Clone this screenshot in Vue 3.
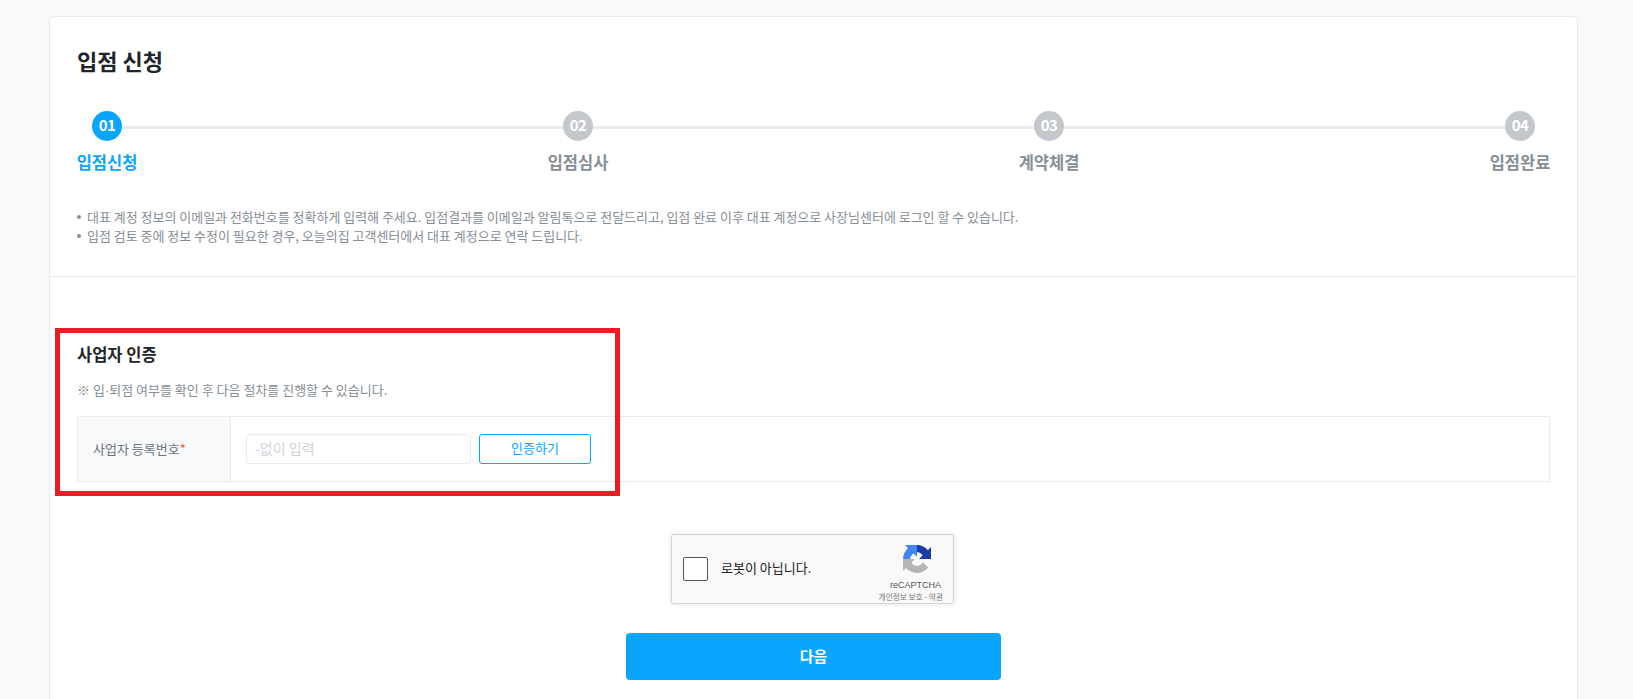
<template>
  <div class="page">
    <div class="card">
      <div class="top">
        <h1 class="title">입점 신청</h1>
        <div class="steps">
          <div v-for="(step, i) in steps" :key="step" class="step" :class="{ active: i === 0 }">
            <span class="num">0{{ i + 1 }}</span>
            <span class="name">{{ step }}</span>
          </div>
        </div>
        <ul class="notes">
          <li>대표 계정 정보의 이메일과 전화번호를 정확하게 입력해 주세요. 입점결과를 이메일과 알림톡으로 전달드리고, 입점 완료 이후 대표 계정으로 사장님센터에 로그인 할 수 있습니다.</li>
          <li>입점 검토 중에 정보 수정이 필요한 경우, 오늘의집 고객센터에서 대표 계정으로 연락 드립니다.</li>
        </ul>
      </div>
      <div class="body">
        <h2 class="sub">사업자 인증</h2>
        <p class="desc">※ 입<span class="dot">·</span>퇴점 여부를 확인 후 다음 절차를 진행할 수 있습니다.</p>
        <div class="row">
          <div class="label">사업자 등록번호<em>*</em></div>
          <div class="field">
            <input class="input" type="text" placeholder="-없이 입력" />
            <button class="verify" type="button">인증하기</button>
          </div>
        </div>
        <div class="captcha">
          <span class="check"></span>
          <span class="robot">로봇이 아닙니다.</span>
          <div class="brand">
            <svg class="logo" viewBox="0 0 64 64" width="28" height="28">
              <path :d="arrow" fill="#1c3aa9" />
              <path :d="arrow" fill="#4285f4" transform="rotate(-90 32 32)" />
              <path :d="arrow" fill="#b5b5b5" transform="rotate(180 32 32)" />
            </svg>
            <span class="re">reCAPTCHA</span>
            <span class="terms">개인정보 보호 - 약관</span>
          </div>
        </div>
        <button class="next" type="button">다음</button>
      </div>
      <div class="mark"></div>
    </div>
  </div>
</template>

<script setup>
const steps = ["입점신청", "입점심사", "계약체결", "입점완료"];

// recaptcha arrow, the other two are the same path rotated
const arrow =
  "M64 31.955l-.033-1.37V4.687l-7.16 7.16C50.948 4.674 42.033.093 32.05.093 21.66.093 12.43 5.053 6.595 12.733l11.736 11.86a15.55 15.55 0 0 1 4.754-5.334c2.05-1.6 4.952-2.906 8.968-2.906.485 0 .86.057 1.135.163 4.976.393 9.288 3.14 11.828 7.124l-8.307 8.307c10.522-.04 22.4-.066 27.29.001";
</script>

<style>
html,
body {
  margin: 0;
  background: #f8f9fa;
  overflow: hidden;
}
</style>

<style scoped>
.page {
  height: 699px;
  overflow: hidden;
  padding: 16px 0 0 49px;
  box-sizing: border-box;
  background: #f8f9fa;
  font-family: "Noto Sans CJK KR", "Noto Sans", sans-serif;
}
.card {
  position: relative;
  width: 1529px;
  box-sizing: border-box;
  background: #fff;
  border: 1px solid #e9ecef;
  border-radius: 4px;
}
.top {
  padding: 28px 27px 31.5px;
  border-bottom: 1px solid #e9ecef;
}
.title {
  margin: 0;
  font-size: 22px;
  line-height: 30px;
  font-weight: 700;
  color: #212529;
}
.steps {
  position: relative;
  display: flex;
  justify-content: space-between;
  margin-top: 36px;
}
.steps::before {
  content: "";
  position: absolute;
  top: 15px;
  left: 30px;
  right: 30px;
  height: 3px;
  background: #e9ecef;
}
.step {
  position: relative;
  display: flex;
  flex-direction: column;
  align-items: center;
  width: 60px;
}
.num {
  width: 30px;
  height: 30px;
  border-radius: 50%;
  background: #c4c8cc;
  color: #fff;
  font-size: 15px;
  letter-spacing: -0.5px;
  font-weight: 700;
  line-height: 27px;
  text-align: center;
}
.name {
  margin-top: 9px;
  font-size: 16.5px;
  line-height: 25px;
  font-weight: 700;
  color: #868e96;
  white-space: nowrap;
}
.active .num {
  background: #0aa5ff;
}
.active .name {
  color: #0aa5ff;
}
.notes {
  list-style: none;
  margin: 31.5px 0 0;
  padding: 0;
  font-size: 13px;
  line-height: 19px;
  word-spacing: -0.08px;
  color: #868e96;
}
.notes li {
  position: relative;
  padding-left: 10px;
}
.notes li::before {
  content: "";
  position: absolute;
  left: 0;
  top: 8px;
  width: 4px;
  height: 4px;
  border-radius: 50%;
  background: #868e96;
}
.body {
  padding: 65px 27px 40px;
}
.sub {
  margin: 0;
  font-size: 16.5px;
  line-height: 24px;
  font-weight: 700;
  color: #212529;
}
.desc {
  margin: 14px 0 15px;
  font-size: 13px;
  line-height: 20px;
  color: #868e96;
}
.dot {
  font-family: "Liberation Sans", Arial, sans-serif;
}
.row {
  display: flex;
  height: 66px;
  box-sizing: border-box;
  border: 1px solid #e9ecef;
}
.label {
  display: flex;
  align-items: center;
  width: 153px;
  padding: 0 0 2px 15px;
  box-sizing: border-box;
  background: #f8f9fa;
  border-right: 1px solid #e9ecef;
  font-size: 13px;
  color: #6c757d;
}
.label em {
  font-style: normal;
  color: #fa5a3c;
}
.field {
  display: flex;
  align-items: center;
  gap: 8px;
  padding-left: 15px;
}
.input {
  width: 225px;
  height: 30px;
  box-sizing: border-box;
  padding: 0 8px 2px;
  border: 1px solid #e9ecef;
  border-radius: 3px;
  outline: none;
  font-family: inherit;
  font-size: 14px;
}
.input::placeholder {
  color: #ced4da;
}
.verify {
  width: 112px;
  height: 30px;
  padding: 0 0 3px;
  background: #fff;
  border: 1px solid #0aa5ff;
  border-radius: 3px;
  font-family: inherit;
  font-size: 13px;
  color: #0aa5ff;
}
.captcha {
  display: flex;
  align-items: center;
  width: 283px;
  height: 70px;
  box-sizing: border-box;
  margin: 52px 0 0 594px;
  padding: 0 10px 0 11px;
  background: #f9f9f9;
  border: 1px solid #d3d3d3;
  border-radius: 3px;
  box-shadow: 0 0 4px 1px rgba(0, 0, 0, 0.08);
}
.check {
  width: 25px;
  height: 24px;
  box-sizing: border-box;
  background: #fff;
  border: 1px solid #555;
  border-radius: 2px;
}
.robot {
  margin: 0 0 3px 13px;
  font-size: 13px;
  color: #222;
}
.brand {
  display: flex;
  flex-direction: column;
  align-items: flex-end;
  margin-top: 8px;
  margin-left: auto;
}
.logo {
  margin: 0 12px 7px 0;
}
.re {
  margin-right: 2px;
  font-family: "Liberation Sans", Arial, sans-serif;
  font-size: 9px;
  line-height: 11px;
  color: #555;
}
.terms {
  font-size: 7.7px;
  line-height: 11px;
  color: #777;
  white-space: nowrap;
}
.next {
  display: block;
  width: 375px;
  height: 47px;
  margin: 29px auto 0;
  padding: 0 0 3px;
  background: #0aa5ff;
  border: none;
  border-radius: 4px;
  font-family: inherit;
  font-size: 15px;
  font-weight: 700;
  color: #fff;
}
.mark {
  position: absolute;
  left: 5px;
  top: 311px;
  width: 565px;
  height: 168px;
  box-sizing: border-box;
  border: 5px solid #ed1c24;
}
</style>
